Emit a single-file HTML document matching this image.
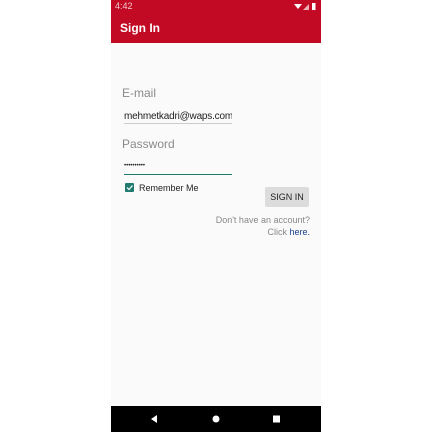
<!DOCTYPE html>
<html><head><style>
body{margin:0;width:432px;height:432px;background:#fff;position:relative;font-family:"Liberation Sans",sans-serif;overflow:hidden}
.ph{position:absolute;left:111px;top:0;width:210px;height:432px;background:#fafafa}
.a{position:absolute;white-space:nowrap}
</style></head><body>
<div class="ph">
<div class="a" style="left:0;top:0;width:210px;height:43px;background:#c20a24"></div>
<div class="a" style="left:4px;top:1px;font-size:9px;color:#f3c9cf">4:42</div>
<svg class="a" style="left:183px;top:3px" width="24" height="8"><path d="M0 1h8l-4 5z" fill="#fff"/><path d="M9 7l6-6v6z" fill="#f0b0b8"/><rect x="18" y="0" width="3.5" height="7" fill="#fff"/></svg>
<div class="a" style="left:9px;top:21px;font-size:12px;font-weight:bold;color:#fff">Sign In</div>
<div class="a" style="left:11px;top:86px;font-size:12px;color:#8a8a8a">E-mail</div>
<div class="a" style="left:13px;top:111px;width:108px;overflow:hidden;font-size:10px;letter-spacing:-0.2px;color:#222">mehmetkadri@waps.com</div>
<div class="a" style="left:13px;top:123px;width:108px;height:1px;background:#ccc"></div>
<div class="a" style="left:11px;top:137px;font-size:12px;color:#8a8a8a">Password</div>
<div class="a" style="left:13px;top:163px;font-size:6px;color:#222;letter-spacing:0">••••••••••</div>
<div class="a" style="left:13px;top:174px;width:108px;height:1px;background:#1f7a70"></div>
<div class="a" style="left:14px;top:183px;width:9px;height:9px;background:#1f7a70;border-radius:1px"></div>
<svg class="a" style="left:14px;top:183px" width="9" height="9"><path d="M2 4.5l2 2 3.5-4" stroke="#fff" stroke-width="1.2" fill="none"/></svg>
<div class="a" style="left:28px;top:183px;font-size:9px;color:#222">Remember Me</div>
<div class="a" style="left:154px;top:187px;width:44px;height:20px;background:#dcdcdc;border-radius:2px;font-size:9px;color:#222;text-align:center;line-height:20px">SIGN IN</div>
<div class="a" style="right:11px;top:215px;font-size:9px;color:#888;text-align:right">Don't have an account?</div>
<div class="a" style="right:11px;top:227px;font-size:9px;color:#888;text-align:right">Click <span style="color:#1b3f8f">here.</span></div>
<div class="a" style="left:0;top:406px;width:210px;height:26px;background:#000"></div>
<svg class="a" style="left:0;top:406px" width="210" height="26"><path d="M40 13l6-4v8z" fill="#fff"/><circle cx="105" cy="13" r="3.5" fill="#fff"/><rect x="162" y="9.5" width="7" height="7" fill="#fff"/></svg>
</div>
</body></html>
